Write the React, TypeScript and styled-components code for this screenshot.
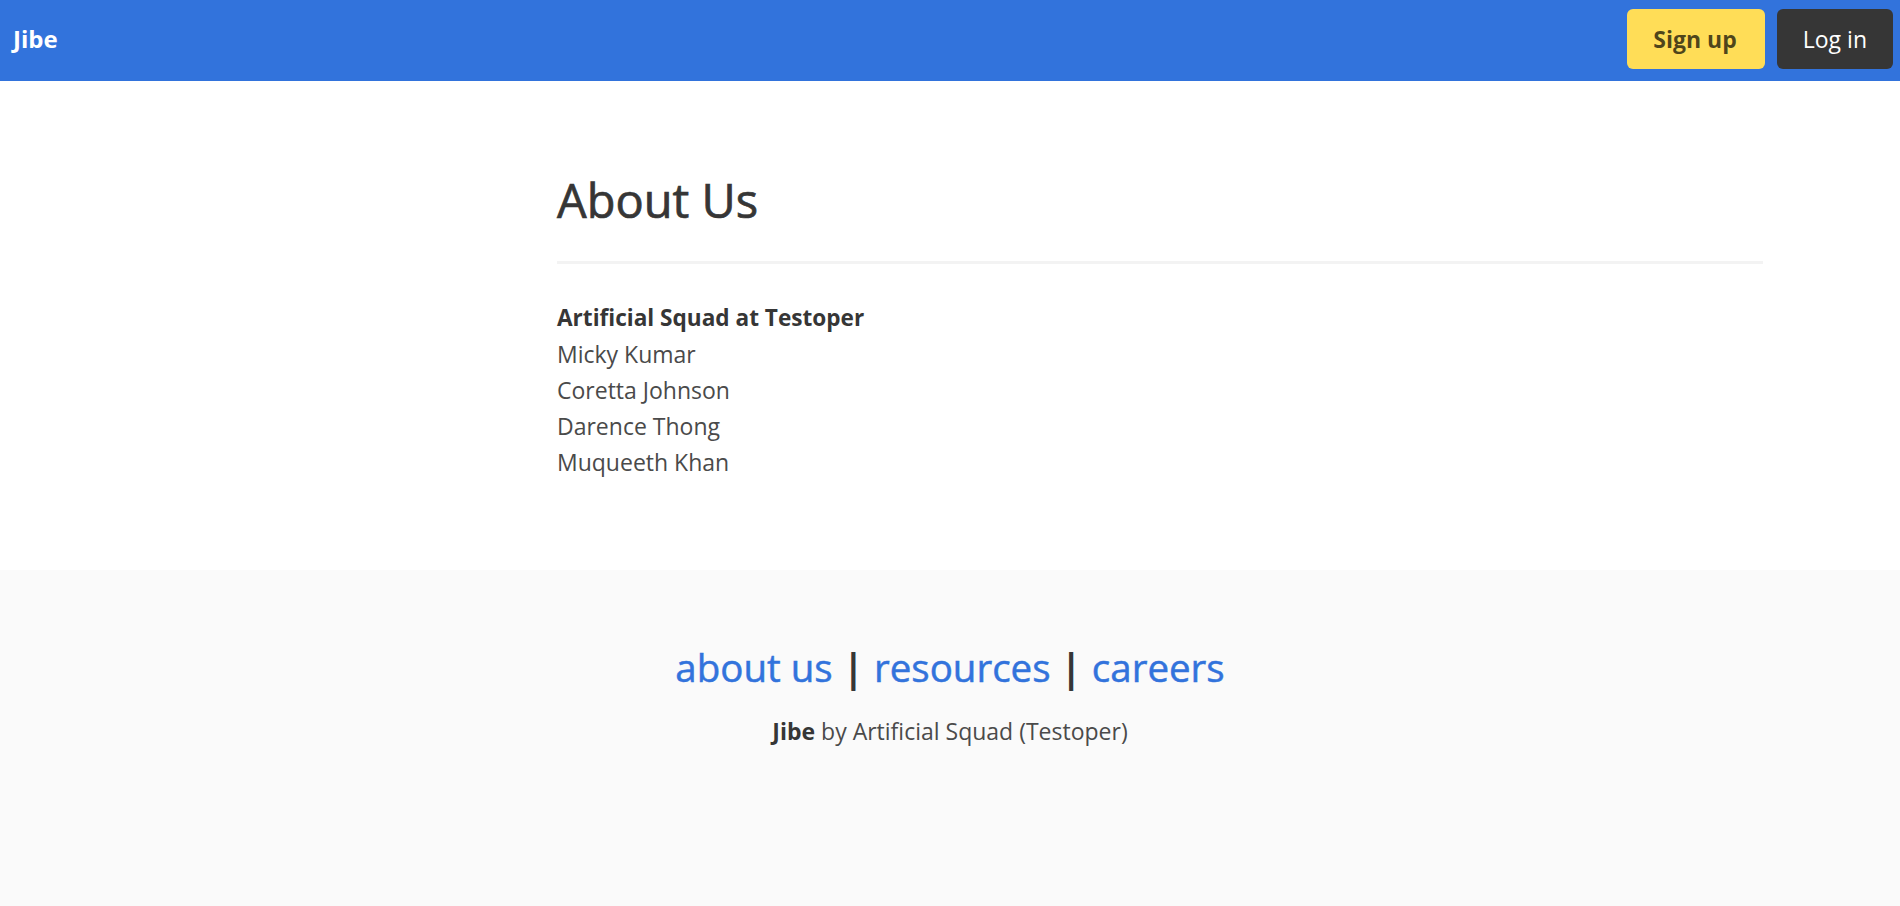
import React from "react";
import styled, { createGlobalStyle } from "styled-components";

const GlobalStyle = createGlobalStyle`
  html, body {
    margin: 0;
    padding: 0;
    background: #ffffff;
  }
  body {
    font-family: "Open Sans", "Noto Sans", Arial, sans-serif;
    color: #4a4a4a;
    font-size: 23px;
    line-height: 36px;
  }
  * { box-sizing: border-box; }
`;

const Page = styled.div`
  display: flex;
  flex-direction: column;
  min-height: 906px;
`;

const Navbar = styled.nav`
  height: 81px;
  background: #3273dc;
  display: flex;
  align-items: flex-start;
  justify-content: space-between;
  padding: 9px 7px 0 13px;
`;

const Brand = styled.a`
  color: #ffffff;
  font-weight: 700;
  font-size: 24px;
  line-height: 60px;
  text-decoration: none;
`;

const Buttons = styled.div`
  display: flex;
  gap: 12px;
`;

const Button = styled.a<{ $variant: "warning" | "dark" }>`
  display: flex;
  align-items: center;
  justify-content: center;
  height: 60px;
  padding: 0 26px;
  border-radius: 6px;
  font-size: 23px;
  text-decoration: none;
  background: ${(p) => (p.$variant === "warning" ? "#ffdd57" : "#363636")};
  color: ${(p) => (p.$variant === "warning" ? "rgba(0,0,0,0.7)" : "#ffffff")};
  font-weight: ${(p) => (p.$variant === "warning" ? 700 : 400)};
  padding-right: ${(p) => (p.$variant === "warning" ? "28px" : "26px")};
`;

const Section = styled.section`
  padding: 92px 0 90px;
`;

const Container = styled.div`
  margin-left: 557px;
  width: 1206px;
`;

const Title = styled.h1`
  margin: 0;
  font-size: 47px;
  line-height: 54px;
  font-weight: 400;
  color: #363636;
  -webkit-text-stroke: 0.7px #363636;
`;

const Rule = styled.hr`
  border: none;
  height: 3px;
  background: #f3f3f3;
  margin: 34px 0 36px;
`;

const Lines = styled.div`
  display: flex;
  flex-direction: column;
`;

const Line = styled.div<{ $strong?: boolean }>`
  font-size: ${(p) => (p.$strong ? "22.6px" : "23px")};
  line-height: 36px;
  font-weight: ${(p) => (p.$strong ? 700 : 400)};
  color: ${(p) => (p.$strong ? "#363636" : "#4a4a4a")};
`;

const Footer = styled.footer`
  flex: 1;
  background: #fafafa;
  padding: 73px 24px 96px;
  text-align: center;
`;

const Links = styled.p`
  margin: 0;
  font-size: 38.5px;
  line-height: 48px;
  font-weight: 400;
  color: #363636;
`;

const FooterLink = styled.a`
  color: #3273dc;
  text-decoration: none;
  -webkit-text-stroke: 0.5px #3273dc;
`;

const Separator = styled.span`
  font-weight: 700;
  color: #363636;
`;

const Credit = styled.p`
  margin: 22px 0 0;
  font-size: 23px;
  line-height: 36px;
  color: #4a4a4a;
`;

const Strong = styled.strong`
  color: #363636;
  font-weight: 700;
`;

export default function App() {
  const members = ["Micky Kumar", "Coretta Johnson", "Darence Thong", "Muqueeth Khan"];
  return (
    <Page>
      <GlobalStyle />
      <Navbar>
        <Brand href="#">Jibe</Brand>
        <Buttons>
          <Button $variant="warning" href="#">Sign up</Button>
          <Button $variant="dark" href="#">Log in</Button>
        </Buttons>
      </Navbar>
      <Section>
        <Container>
          <Title>About Us</Title>
          <Rule />
          <Lines>
            <Line $strong>Artificial Squad at Testoper</Line>
            {members.map((m) => (
              <Line key={m}>{m}</Line>
            ))}
          </Lines>
        </Container>
      </Section>
      <Footer>
        <Links>
          <FooterLink href="#">about us</FooterLink> <Separator>|</Separator>{" "}
          <FooterLink href="#">resources</FooterLink> <Separator>|</Separator>{" "}
          <FooterLink href="#">careers</FooterLink>
        </Links>
        <Credit>
          <Strong>Jibe</Strong> by Artificial Squad (Testoper)
        </Credit>
      </Footer>
    </Page>
  );
}
